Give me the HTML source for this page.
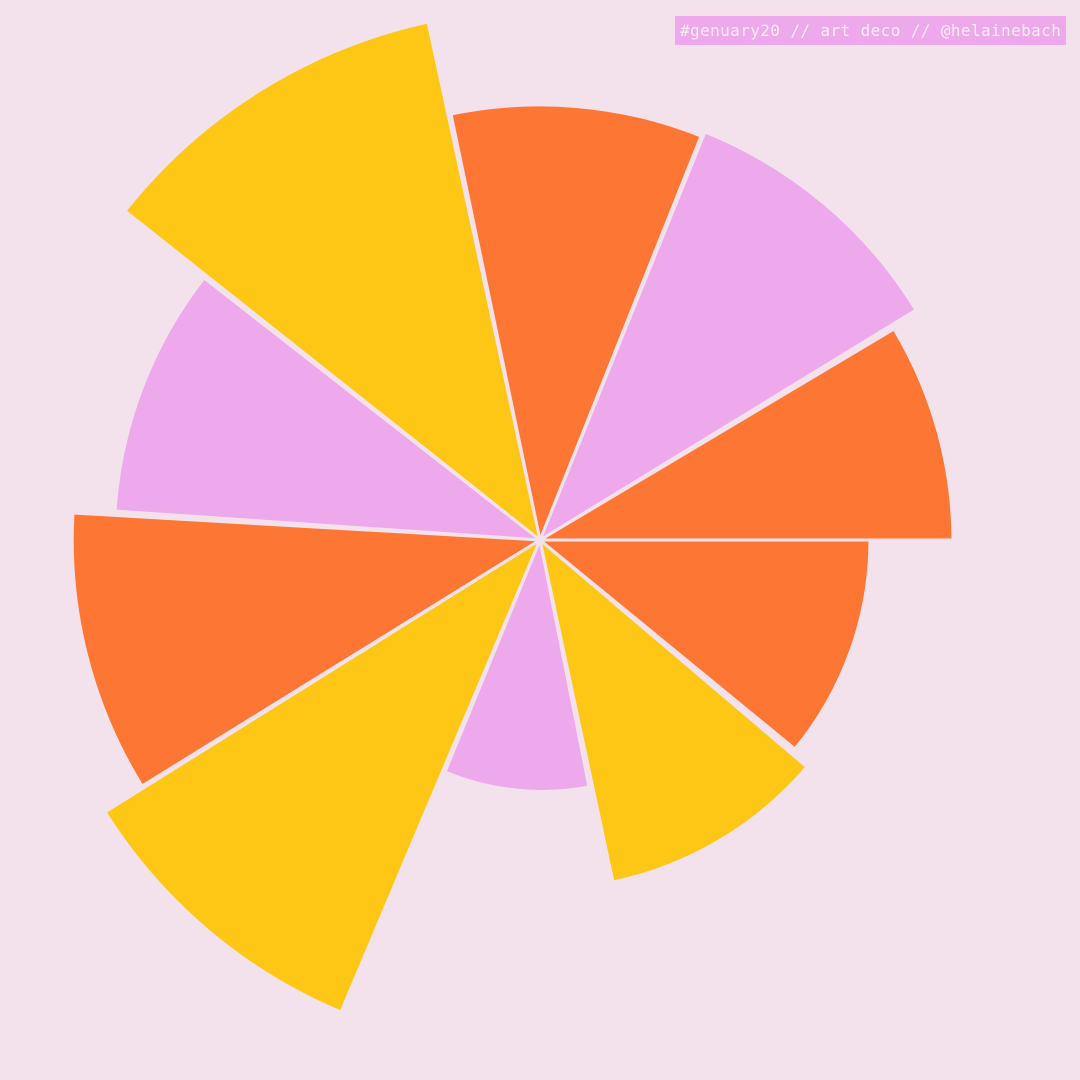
<!DOCTYPE html>
<html><head><meta charset="utf-8"><style>
html,body{margin:0;padding:0;background:#f3e2ec;}
.l{position:absolute;left:675px;top:16px;width:391px;height:29px;background:#eea8ec;color:#fbeef6;font:16px "DejaVu Sans Mono","Liberation Mono",monospace;letter-spacing:0.4px;line-height:30px;text-align:left;padding-left:5px;box-sizing:border-box;white-space:nowrap;}
</style></head><body>
<svg width="1080" height="1080" viewBox="0 0 1080 1080" style="display:block">
<rect width="1080" height="1080" fill="#f3e2ec"/>
<g stroke="#f3e2ec" stroke-width="3" stroke-linejoin="miter">
<path d="M540,540 L953,540 A413,413 0 0 0 894,329 Z" fill="#fe7634"/>
<path d="M540,540 L916,310 A440,440 0 0 0 705,132 Z" fill="#eea8ec"/>
<path d="M540,540 L701,136 A435,435 0 0 0 451,114 Z" fill="#fe7634"/>
<path d="M540,540 L428,22 A530,530 0 0 0 125,211 Z" fill="#fec615"/>
<path d="M540,540 L204,278 A426,426 0 0 0 115,511 Z" fill="#eea8ec"/>
<path d="M540,540 L73,513 A468,468 0 0 0 142,786 Z" fill="#fe7634"/>
<path d="M540,540 L105,812 A513,513 0 0 0 341,1012 Z" fill="#fec615"/>
<path d="M540,540 L445,772 A251,251 0 0 0 589,787 Z" fill="#eea8ec"/>
<path d="M540,540 L613,882 A350,350 0 0 0 807,767 Z" fill="#fec615"/>
<path d="M540,540 L795,749 A330,330 0 0 0 870,540 Z" fill="#fe7634"/>
</g>
</svg>
<div class="l">#genuary20 // art deco // @helainebach</div>
</body></html>
